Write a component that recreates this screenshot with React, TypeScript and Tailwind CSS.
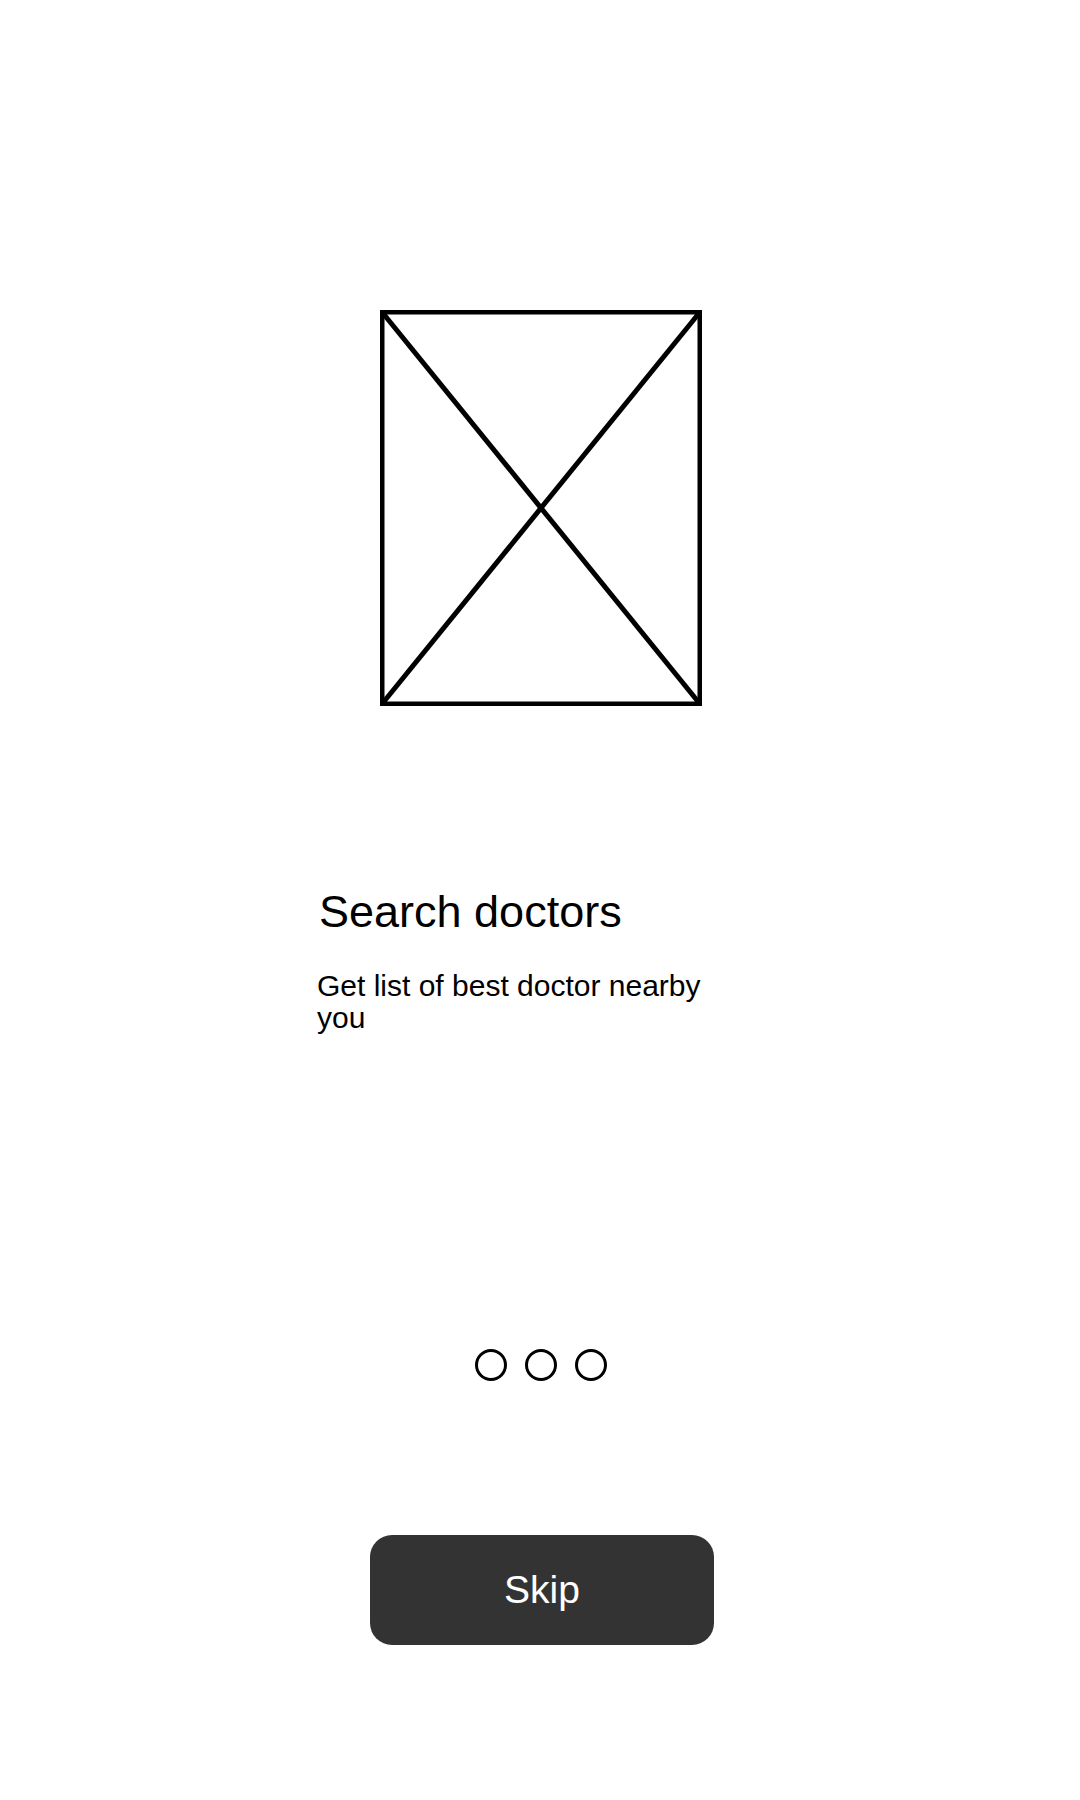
export default function App() {
  return (
    <div className="w-[1080px] h-[1800px] bg-white flex flex-col" style={{ fontFamily: '"Liberation Sans", Arial, sans-serif' }}>
      <div className="mt-[310px] flex justify-center">
        <div className="w-[322px] h-[396px] ml-[1px]">
          <svg width="322" height="396" viewBox="0 0 322 396">
            <rect x="2.25" y="2.25" width="317.5" height="391.5" fill="none" stroke="#000" strokeWidth="4.5" />
            <line x1="2" y1="2" x2="320" y2="394" stroke="#000" strokeWidth="5" />
            <line x1="320" y1="2" x2="2" y2="394" stroke="#000" strokeWidth="5" />
          </svg>
        </div>
      </div>

      <div className="pl-[319px] mt-[183px]">
        <h1 className="text-[45px] leading-none text-black">Search doctors</h1>
        <p className="w-[410px] mt-[36px] -ml-[2px] text-[30px] leading-[32px] text-black">Get list of best doctor nearby you</p>
      </div>

      <div className="mt-[315px] flex justify-center gap-[18px] ml-[2px]">
        <span className="w-[32px] h-[32px] rounded-full border-[3px] border-black" />
        <span className="w-[32px] h-[32px] rounded-full border-[3px] border-black" />
        <span className="w-[32px] h-[32px] rounded-full border-[3px] border-black" />
      </div>

      <div className="mt-[154px] flex justify-center ml-[4px]">
        <button className="w-[344px] h-[110px] rounded-[22px] bg-[#333333] text-white text-[39px]">Skip</button>
      </div>
    </div>
  );
}
